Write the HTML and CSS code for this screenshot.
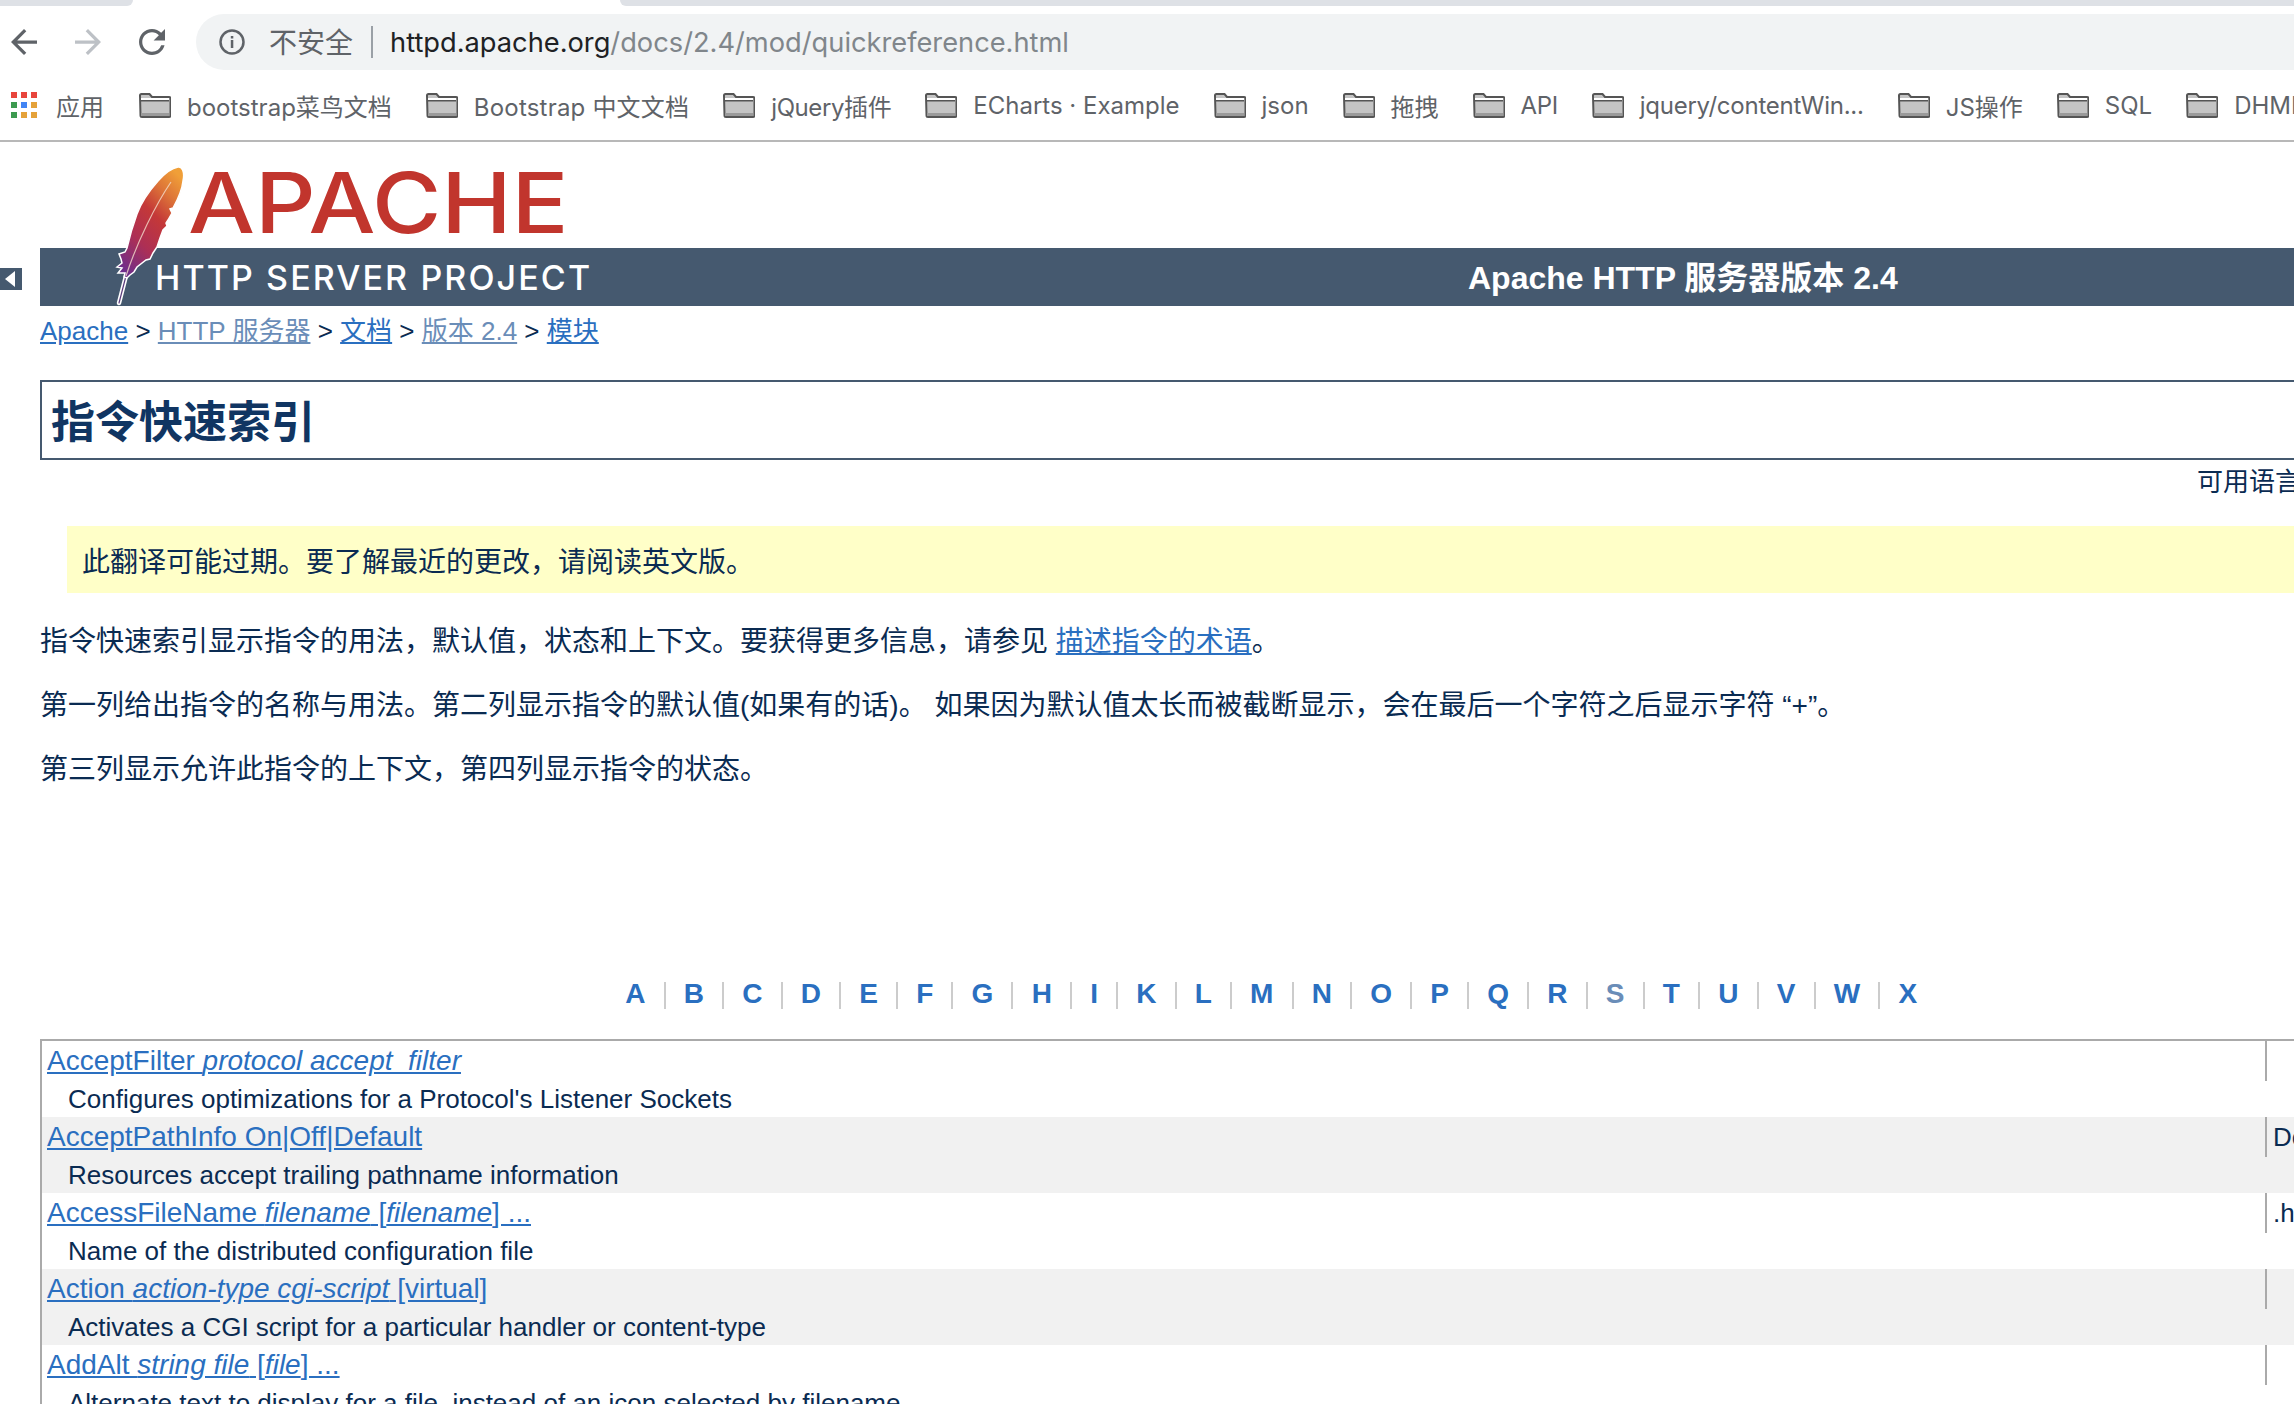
FILE: index.html
```html
<!DOCTYPE html>
<html lang="zh-CN">
<head>
  <meta charset="UTF-8" />
  <title>指令快速索引</title>
  <link rel="stylesheet" href="styles.css">
</head>
<body>
  <svg class="defs" width="0" height="0">
    <symbol id="folder" viewBox="0 0 32 25">
      <path d="M1 2.5a1.5 1.5 0 0 1 1.5-1.5h8l2.5 3h17a1.5 1.5 0 0 1 1.5 1.5v17a1.5 1.5 0 0 1-1.500 1.500h-27a1.500 1.500 0 0 1-1.500-1.500z" fill="#c4c4c4" stroke="#555" stroke-width="2"/>
      <rect x="2" y="5" width="28" height="2" fill="#fff"/>
      <rect x="2" y="7" width="28" height="1.500" fill="#555"/>
      <rect x="2" y="20" width="28" height="3" fill="#9a9a9a"/>
    </symbol>
  </svg>

  <div class="tabstrip">
    <div class="tab-left"></div>
    <div class="tab-active"></div>
    <div class="tab-right"></div>
  </div>

  <div class="toolbar">
    <svg class="nav-icon" viewBox="4 4 16 16"><path fill="#5f6368" d="M20 11H7.830l5.590-5.590L12 4l-8 8 8 8 1.410-1.410L7.830 13H20v-2z"/></svg>
    <svg class="nav-icon" viewBox="4 4 16 16"><path fill="#bdc1c6" d="M4 11h12.170l-5.590-5.590L12 4l8 8-8 8-1.410-1.410L16.170 13H4v-2z"/></svg>
    <svg class="nav-icon" viewBox="4 4 16 16"><path fill="#5f6368" d="M17.650 6.350A7.958 7.958 0 0 0 12 4c-4.420 0-7.990 3.580-7.990 8s3.570 8 7.990 8c3.730 0 6.840-2.550 7.730-6h-2.080A5.990 5.990 0 0 1 12 18c-3.310 0-6-2.690-6-6s2.690-6 6-6c1.660 0 3.140.690 4.220 1.780L13 11h7V4l-2.350 2.350z"/></svg>
    <div class="urlbar">
      <svg class="info-icon" viewBox="0 0 26 26">
        <circle cx="13" cy="13" r="11.500" fill="none" stroke="#5f6368" stroke-width="2.500"/>
        <rect x="11.800" y="11" width="2.500" height="8" fill="#5f6368"/>
        <rect x="11.800" y="7" width="2.500" height="2.500" fill="#5f6368"/>
      </svg>
      <span class="not-secure">不安全</span>
      <span class="url-sep"></span>
      <span class="url"><span class="host">httpd.apache.org</span>/docs/2.4/mod/quickreference.html</span>
    </div>
  </div>

  <div class="bookmarks">
    <div class="apps">
      <i class="r"></i><i class="r"></i><i class="r"></i>
      <i class="g"></i><i class="b"></i><i class="y"></i>
      <i class="g"></i><i class="y"></i><i class="y"></i>
    </div>
    <span class="apps-label">应用</span>
    <div class="bookmark"><svg class="folder"><use href="#folder"/></svg>bootstrap菜鸟文档</div>
    <div class="bookmark wide"><svg class="folder"><use href="#folder"/></svg>Bootstrap 中文文档</div>
    <div class="bookmark tight"><svg class="folder"><use href="#folder"/></svg>jQuery插件</div>
    <div class="bookmark"><svg class="folder"><use href="#folder"/></svg>ECharts · Example</div>
    <div class="bookmark"><svg class="folder"><use href="#folder"/></svg>json</div>
    <div class="bookmark"><svg class="folder"><use href="#folder"/></svg>拖拽</div>
    <div class="bookmark tight"><svg class="folder"><use href="#folder"/></svg>API</div>
    <div class="bookmark tighter"><svg class="folder"><use href="#folder"/></svg>jquery/contentWin...</div>
    <div class="bookmark"><svg class="folder"><use href="#folder"/></svg>JS操作</div>
    <div class="bookmark"><svg class="folder"><use href="#folder"/></svg>SQL</div>
    <div class="bookmark"><svg class="folder"><use href="#folder"/></svg>DHML</div>
  </div>

  <div class="page">
    <div class="masthead">
      <div class="apache-word"><span>APACHE</span></div>
      <div class="banner-row">
        <div class="collapse-btn"></div>
        <div class="banner">
          <span class="project">HTTP SERVER PROJECT</span>
          <span class="banner-title">Apache HTTP 服务器版本 2.4</span>
        </div>
      </div>
      <svg class="feather" viewBox="0 0 80 150">
        <defs>
          <linearGradient id="feather-fill" x1="0.8" y1="0" x2="0.2" y2="1">
            <stop offset="0" stop-color="#f09f38"/>
            <stop offset="0.2" stop-color="#dd7438"/>
            <stop offset="0.42" stop-color="#c43838"/>
            <stop offset="0.7" stop-color="#ad2f55"/>
            <stop offset="1" stop-color="#6d2d8c"/>
          </linearGradient>
        </defs>
        <path d="M9 143L17 112" stroke="#fff" stroke-width="4.500" stroke-linecap="round"/>
        <path d="M9 143L17 112" stroke="#5b3a7c" stroke-width="1.200" stroke-linecap="round"/>
        <path fill="url(#feather-fill)" stroke="#fff" stroke-width="1.500" d="M68 7C72 6 75 12 73 21C72 31 68 39 63 48L60 49L62 53L58 60L56 63L57 66L53 70L50 78L47 87L43 93L40 99L36 100L27 107L24 112L20 115L17 118L14 117L15 113L8 113L12 108L7 107L12 103L11 99L9 94L15 92L17 88C20 75 23 65 27 54C32 40 40 30 48 21C55 13 62 8 68 7z"/>
        <path d="M61 22C46 44 27 82 16 116" fill="none" stroke="#f4dccb" stroke-width="1.200" opacity="0.8"/>
      </svg>
    </div>

    <div class="breadcrumb">
      <a href="#">Apache</a> &gt; <a class="visited" href="#">HTTP 服务器</a> &gt; <a href="#">文档</a> &gt; <a class="visited" href="#">版本 2.4</a> &gt; <a href="#">模块</a>
    </div>

    <h1>指令快速索引</h1>
    <div class="langs">可用语言:</div>
    <div class="note">此翻译可能过期。要了解最近的更改，请阅读英文版。</div>

    <p class="intro">指令快速索引显示指令的用法，默认值，状态和上下文。要获得更多信息，请参见 <a href="#">描述指令的术语</a>。</p>
    <p>第一列给出指令的名称与用法。第二列显示指令的默认值(如果有的话)。 如果因为默认值太长而被截断显示，会在最后一个字符之后显示字符 “+”。</p>
    <p>第三列显示允许此指令的上下文，第四列显示指令的状态。</p>

    <div class="letters">
      <a href="#">A</a><a href="#">B</a><a href="#">C</a><a href="#">D</a><a href="#">E</a><a href="#">F</a><a href="#">G</a><a href="#">H</a><a href="#">I</a><a href="#">K</a><a href="#">L</a><a href="#">M</a><a href="#">N</a><a href="#">O</a><a href="#">P</a><a href="#">Q</a><a href="#">R</a><a class="visited" href="#">S</a><a href="#">T</a><a href="#">U</a><a href="#">V</a><a href="#">W</a><a href="#">X</a>
    </div>

    <table class="qref">
      <tbody>
        <tr class="usage"><td><a href="#">AcceptFilter <em>protocol accept_filter</em></a></td><td></td></tr>
        <tr class="desc"><td colspan="2">Configures optimizations for a Protocol's Listener Sockets</td></tr>
        <tr class="usage odd"><td><a href="#">AcceptPathInfo On|Off|Default</a></td><td>Default</td></tr>
        <tr class="desc odd"><td colspan="2">Resources accept trailing pathname information</td></tr>
        <tr class="usage"><td><a href="#">AccessFileName <em>filename</em> [<em>filename</em>] ...</a></td><td>.htaccess</td></tr>
        <tr class="desc"><td colspan="2">Name of the distributed configuration file</td></tr>
        <tr class="usage odd"><td><a href="#">Action <em>action-type cgi-script</em> [virtual]</a></td><td></td></tr>
        <tr class="desc odd"><td colspan="2">Activates a CGI script for a particular handler or content-type</td></tr>
        <tr class="usage"><td><a href="#">AddAlt <em>string file</em> [<em>file</em>] ...</a></td><td></td></tr>
        <tr class="desc"><td colspan="2">Alternate text to display for a file, instead of an icon selected by filename</td></tr>
      </tbody>
    </table>
  </div>
</body>
</html>
```

FILE: styles.css
```css
html, body {
  margin: 0;
  height: 1404px;
  overflow: hidden;
  background: #fff;
}

body {
  font-family: "Liberation Sans", "Noto Sans CJK SC", sans-serif;
  font-size: 28px;
  color: #0a2b52;
}

a {
  color: #2a6fc0;
}

a.visited {
  color: #6a8db8;
}

.defs {
  position: absolute;
}

/* browser chrome */
.tabstrip {
  display: flex;
  height: 6px;
}

.tab-left {
  width: 133px;
  background: #dee1e6;
  border-bottom-right-radius: 10px;
}

.tab-active {
  width: 487px;
}

.tab-right {
  flex: 1;
  background: #dee1e6;
  border-bottom-left-radius: 10px;
}

.toolbar {
  display: flex;
  align-items: center;
  height: 56px;
  margin-top: 8px;
  padding-left: 11px;
  font-family: Inter, "Noto Sans CJK SC", sans-serif;
}

.nav-icon {
  width: 26px;
  height: 26px;
  margin-right: 38px;
  flex: none;
}

.nav-icon:nth-child(3) {
  margin-right: 31px;
}

.urlbar {
  flex: 1;
  display: flex;
  align-items: center;
  height: 56px;
  padding-left: 23px;
  background: #f1f3f4;
  border-radius: 28px 0 0 28px;
}

.info-icon {
  width: 26px;
  height: 26px;
  margin-right: 24px;
}

.not-secure {
  font-size: 28px;
  color: #5f6368;
  margin-bottom: 3px;
}

.url-sep {
  width: 2px;
  height: 32px;
  margin: 0 17px 0 18px;
  background: #9aa0a6;
}

.url {
  font-size: 27.25px;
  color: #80868b;
  white-space: nowrap;
}

.host {
  color: #202124;
}

.bookmarks {
  display: flex;
  align-items: center;
  height: 70px;
  padding-left: 11px;
  border-bottom: 2px solid #b8b8b8;
  font-family: Inter, "Noto Sans CJK SC", sans-serif;
  font-size: 24px;
  color: #5f6368;
  white-space: nowrap;
}

.apps {
  display: grid;
  grid-template-columns: repeat(3, 6px);
  grid-auto-rows: 6px;
  gap: 4px;
  flex: none;
}

.apps i.r { background: #e8453c; }
.apps i.g { background: #3d9a50; }
.apps i.b { background: #4285f4; }
.apps i.y { background: #e5a23a; }

.apps-label {
  margin-left: 19px;
  margin-right: 35px;
}

.bookmark {
  display: flex;
  align-items: center;
  margin-right: 34px;
  flex: none;
}

.bookmark.wide { letter-spacing: 0.2px; }
.bookmark.tight { letter-spacing: -0.4px; }
.bookmark.tighter { letter-spacing: -0.25px; }

.folder {
  width: 32px;
  height: 25px;
  margin-right: 16px;
  flex: none;
}

/* page */
.page {
  width: 2294px;
  overflow: hidden;
}

.masthead {
  position: relative;
}

.apache-word {
  height: 106px;
  padding-left: 188px;
  font-family: Inter, sans-serif;
  font-size: 84px;
  font-weight: 500;
  line-height: 122px;
  color: #c1352d;
}

.apache-word span {
  display: inline-block;
  transform: scaleX(1.125);
  transform-origin: left center;
}

.banner-row {
  display: flex;
}

.collapse-btn {
  width: 0;
  height: 0;
  margin-top: 20px;
  margin-right: 18px;
  background: #45596f;
  flex: none;
  padding: 11px;
  position: relative;
}

.collapse-btn::after {
  content: "";
  position: absolute;
  left: 5px;
  top: 3px;
  border-style: solid;
  border-width: 8px 10px 8px 0;
  border-color: transparent #fff transparent transparent;
}

.banner {
  flex: 1;
  display: flex;
  align-items: center;
  height: 58px;
  padding-left: 115px;
  background: #45596f;
  color: #fff;
  white-space: nowrap;
}

.project {
  width: 437px;
  font-family: Inter, sans-serif;
  font-size: 34px;
  font-weight: 500;
  letter-spacing: 2.1px;
}

.banner-title {
  margin-left: 876px;
  margin-bottom: 5px;
  font-size: 32px;
  font-weight: bold;
}

.feather {
  position: absolute;
  left: 110px;
  top: 18px;
  width: 80px;
  height: 150px;
}

.breadcrumb {
  margin: 6px 0 0 40px;
  font-size: 26px;
  line-height: 38px;
}

h1 {
  height: 73px;
  margin: 30px 0 0 40px;
  padding: 3px 0 0 9px;
  border: 2px solid #45596f;
  border-right: 0;
  font-size: 44px;
  line-height: 76px;
  color: #103562;
}

.langs {
  padding-left: 2197px;
  font-size: 26px;
  line-height: 38px;
  margin-top: 3px;
  margin-bottom: -1px;
  white-space: nowrap;
}

.note {
  display: flex;
  align-items: center;
  height: 67px;
  margin: 26px 0 0 67px;
  padding-left: 15px;
  background: #ffffc8;
}

p {
  margin: 26px 0 0 40px;
  line-height: 38px;
}

p.intro {
  margin-top: 30px;
}

.letters {
  display: flex;
  height: 27px;
  margin-top: 193px;
  padding-left: 607px;
  font-size: 28px;
  font-weight: bold;
  line-height: 24px;
}

.letters a {
  padding: 0 18.15px;
  border-left: 2px solid #ccc;
  text-decoration: none;
}

.letters a:first-child {
  border-left: 0;
}

.qref {
  width: 2525px;
  margin: 30px 0 0 40px;
  border-collapse: separate;
  border-spacing: 0;
  border-top: 2px solid #aaa;
  border-left: 2px solid #aaa;
  table-layout: fixed;
  font-size: 26px;
}

.qref td {
  padding: 0;
  white-space: nowrap;
}

.qref .odd td {
  background: #f1f1f1;
}

.usage td {
  height: 40px;
  padding-left: 5px;
}

.usage a {
  font-size: 28px;
}

.usage td:first-child {
  width: 2223px;
  padding-left: 5px;
  box-sizing: border-box;
}

.usage td:last-child {
  padding-left: 6px;
  border-left: 2px solid #aaa;
}

.desc td {
  height: 36px;
  padding-left: 26px;
}
```
